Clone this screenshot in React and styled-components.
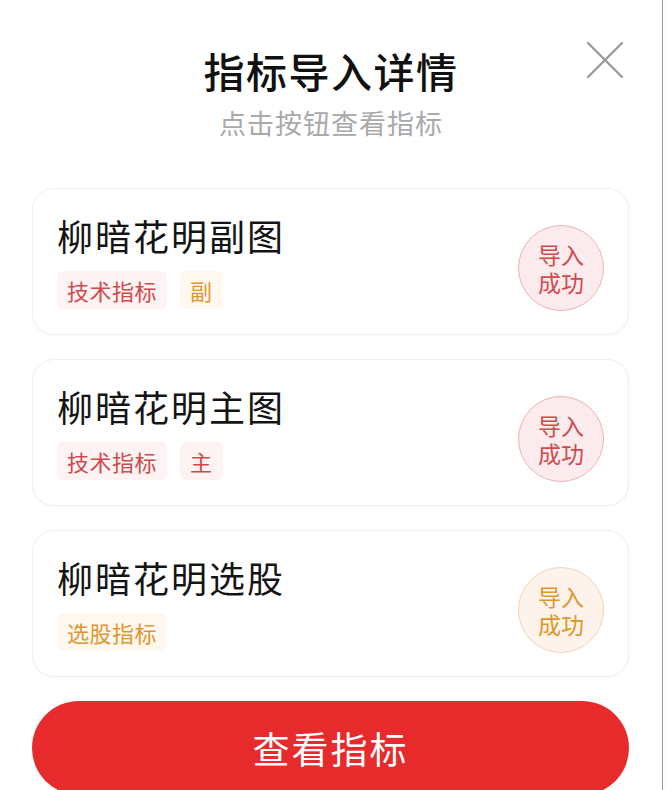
import React from "react";
import styled, { createGlobalStyle } from "styled-components";

const Global = createGlobalStyle`
  html, body { margin: 0; padding: 0; background: #fdfcfa; }
  body { font-family: "Noto Sans CJK SC", "Noto Sans", sans-serif; }
  * { box-sizing: border-box; }
`;

const Sheet = styled.div`
  position: relative;
  width: 663px;
  height: 790px;
  overflow: hidden;
  background: #ffffff;
  border-right: 1px solid #9a9a9a;
`;

const Header = styled.header`
  display: flex;
  flex-direction: column;
  align-items: center;
  padding-top: 45px;
`;

const Title = styled.h1`
  margin: 0;
  font-size: 41px;
  line-height: 50px;
  font-weight: 500;
  color: #111;
  letter-spacing: 1.5px;
`;

const Subtitle = styled.p`
  margin: 10px 0 0;
  font-size: 27px;
  line-height: 36px;
  color: #a9a9a9;
  letter-spacing: 1px;
`;

const Close = styled.button`
  position: absolute;
  top: 40px;
  right: 37px;
  width: 40px;
  height: 40px;
  padding: 0;
  border: none;
  background: transparent;
  cursor: pointer;
`;

const List = styled.div`
  display: flex;
  flex-direction: column;
  gap: 24px;
  padding: 47px 33px 0 32px;
`;

const Card = styled.div`
  display: flex;
  align-items: center;
  justify-content: space-between;
  height: 147px;
  padding: 0 24px 0 24px;
  border: 1px solid #efefef;
  border-radius: 22px;
  background: #fff;
  box-shadow: 0 1px 3px rgba(0, 0, 0, 0.03);
`;

const Info = styled.div`
  display: flex;
  flex-direction: column;
  gap: 14px;
  margin-top: -2px;
`;

const Name = styled.div`
  font-size: 36px;
  line-height: 44px;
  color: #141414;
  letter-spacing: 2px;
`;

const Tags = styled.div`
  display: flex;
  gap: 13px;
`;

const palettes = {
  red: { fg: "#cf4a4d", bg: "#fdf3f3", border: "#e9b4b4", circle: "#fcebec" },
  gold: { fg: "#e0962e", bg: "#fef8ef", border: "#efd4b8", circle: "#fdf3ea" },
};

const Tag = styled.span`
  display: inline-flex;
  align-items: center;
  height: 38px;
  padding: 0 10px;
  border-radius: 6px;
  font-size: 22px;
  letter-spacing: 0.5px;
  color: ${(p) => palettes[p.$tone].fg};
  background: ${(p) => palettes[p.$tone].bg};
`;

const Badge = styled.div`
  display: flex;
  align-items: center;
  justify-content: center;
  width: 86px;
  height: 86px;
  margin-top: 12px;
  border-radius: 50%;
  border: 1px solid ${(p) => palettes[p.$tone].border};
  background: ${(p) => palettes[p.$tone].circle};
  color: ${(p) => palettes[p.$tone].fg};
  font-size: 23px;
  line-height: 28px;
  text-align: center;
`;

const Footer = styled.div`
  padding: 24px 33px 0 32px;
`;

const Primary = styled.button`
  width: 100%;
  height: 94px;
  border: none;
  border-radius: 47px;
  background: #e72a2c;
  color: #fff;
  font-family: inherit;
  font-size: 37px;
  letter-spacing: 2px;
  cursor: pointer;
`;

const items = [
  { name: "柳暗花明副图", tags: [["技术指标", "red"], ["副", "gold"]], tone: "red" },
  { name: "柳暗花明主图", tags: [["技术指标", "red"], ["主", "red"]], tone: "red" },
  { name: "柳暗花明选股", tags: [["选股指标", "gold"]], tone: "gold" },
];

export default function App() {
  return (
    <>
      <Global />
      <Sheet>
        <Header>
          <Title>指标导入详情</Title>
          <Subtitle>点击按钮查看指标</Subtitle>
        </Header>
        <Close aria-label="关闭">
          <svg width="40" height="40" viewBox="0 0 40 40">
            <path d="M3 3 L37 37 M37 3 L3 37" stroke="#9a9a9a" strokeWidth="2.4" strokeLinecap="round" />
          </svg>
        </Close>
        <List>
          {items.map((it) => (
            <Card key={it.name}>
              <Info>
                <Name>{it.name}</Name>
                <Tags>
                  {it.tags.map(([t, tone]) => (
                    <Tag key={t} $tone={tone}>{t}</Tag>
                  ))}
                </Tags>
              </Info>
              <Badge $tone={it.tone}>
                导入<br />成功
              </Badge>
            </Card>
          ))}
        </List>
        <Footer>
          <Primary>查看指标</Primary>
        </Footer>
      </Sheet>
    </>
  );
}
